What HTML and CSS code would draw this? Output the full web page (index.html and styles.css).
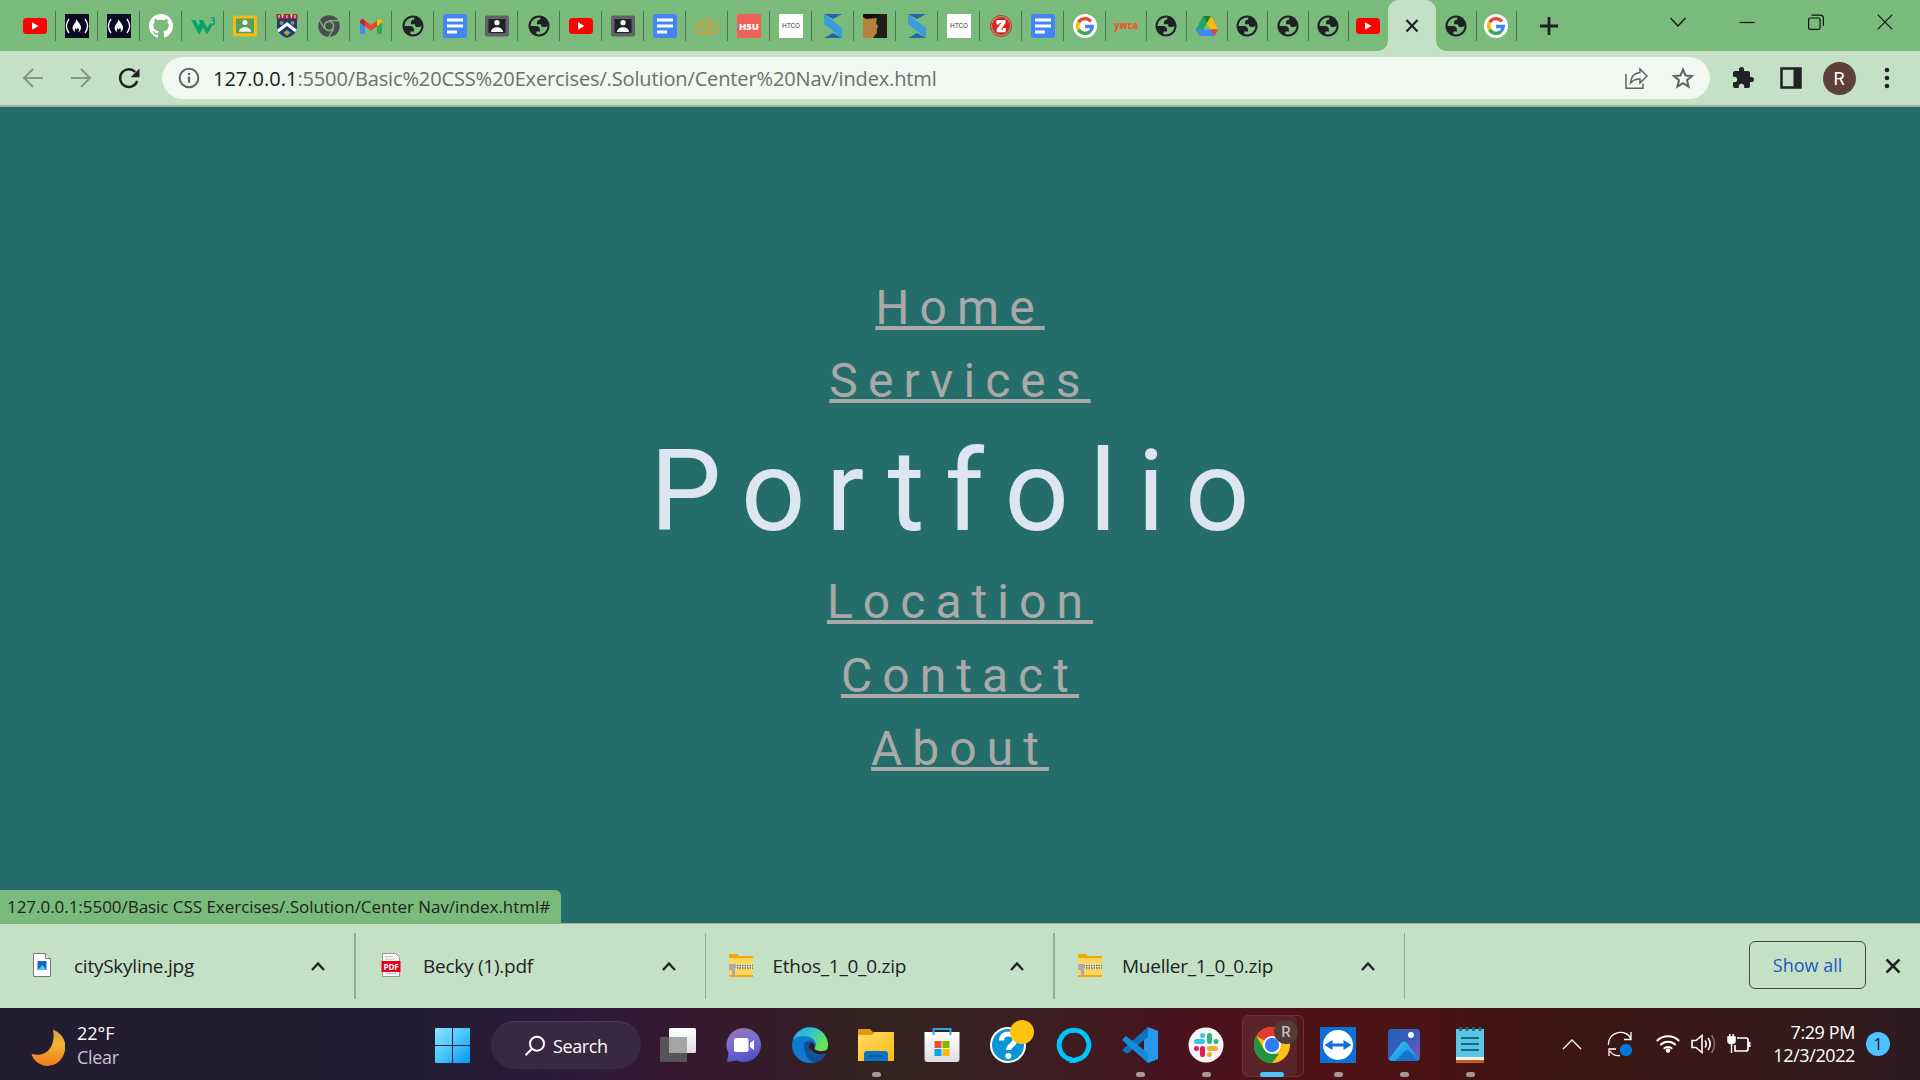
FILE: index.html
```html
<!DOCTYPE html>
<html lang="en">
<head>
<meta charset="utf-8">
<title>Center Nav</title>
<link rel="stylesheet" href="styles.css">
</head>
<body>
<svg class="defs" width="0" height="0" aria-hidden="true">
  <defs>
    <linearGradient id="g-win" x1="0" y1="0" x2="1" y2="1"><stop offset="0" stop-color="#8be3ff"/><stop offset=".5" stop-color="#45c8fb"/><stop offset="1" stop-color="#0594fb"/></linearGradient>
    <linearGradient id="g-moon" x1="0" y1="0" x2="0" y2="1"><stop offset="0" stop-color="#d99a52"/><stop offset=".4" stop-color="#f2b531"/><stop offset="1" stop-color="#ee7a1c"/></linearGradient>
    <linearGradient id="g-tv" x1="0" y1="0" x2="0" y2="1"><stop offset="0" stop-color="#fff"/><stop offset="1" stop-color="#dedede"/></linearGradient>
    <linearGradient id="g-chat" x1=".2" y1="0" x2=".5" y2="1"><stop offset="0" stop-color="#a06cab"/><stop offset=".4" stop-color="#7b73d3"/><stop offset="1" stop-color="#4f50c4"/></linearGradient>
    <linearGradient id="g-edge" x1="0" y1="0" x2="1" y2=".4"><stop offset="0" stop-color="#2fa9ec"/><stop offset=".5" stop-color="#2fc3cf"/><stop offset="1" stop-color="#6be255"/></linearGradient>
    <linearGradient id="g-fold" x1="0" y1="0" x2="1" y2="1"><stop offset="0" stop-color="#ffdc6b"/><stop offset="1" stop-color="#fcb80f"/></linearGradient>
    <linearGradient id="g-photo" x1="0" y1="0" x2="1" y2="1"><stop offset="0" stop-color="#1f63bd"/><stop offset=".5" stop-color="#3b5cbb"/><stop offset="1" stop-color="#8254b0"/></linearGradient>
    <linearGradient id="g-hill" x1="0" y1="0" x2="1" y2="1"><stop offset="0" stop-color="#35c7f5"/><stop offset="1" stop-color="#1484dd"/></linearGradient>
    <symbol id="youtube" viewBox="0 0 24 24"><rect y="4" width="24" height="16" rx="3.500" fill="#f00"/><path d="M9 8.300v7.400l6.500-3.700z" fill="#fff"/></symbol>
    <symbol id="fcc" viewBox="0 0 24 24"><path d="M0 0h24v24H0z" fill="#0a0a23"/><path d="M4 5Q-1.200 12 4 19M20 5Q25.200 12 20 19" fill="none" stroke="#fff" stroke-width="1.300"/><path d="M11.500 5c.8 3 4.500 5 4.500 8.800 0 2.200-1 3.700-2.800 4.400 1.400-2 .6-3.500-.4-4.700 0 1.200-.5 1.800-1.200 1.800-.8 0-1-.7-.8-1.600-1.500 1.800-1.400 3.200-.2 4.500-2-.7-3-2.200-3-4.200 0-3.300 3.700-5.200 3.900-9z" fill="#fff"/></symbol>
    <symbol id="github" viewBox="0 0 16 16"><path fill="#fff" d="M8 0C3.580 0 0 3.580 0 8c0 3.540 2.290 6.530 5.470 7.590.4.070.55-.17.55-.38 0-.19-.01-.82-.01-1.490-2.010.37-2.530-.49-2.690-.94-.09-.23-.48-.94-.82-1.130-.28-.15-.68-.52-.01-.53.63-.01 1.080.58 1.230.82.72 1.210 1.870.87 2.330.66.07-.52.28-.87.51-1.070-1.780-.2-3.640-.89-3.640-3.950 0-.87.31-1.590.82-2.150-.08-.2-.36-1.020.08-2.120 0 0 .67-.21 2.200.82.64-.18 1.320-.27 2-.27s1.360.09 2 .27c1.530-1.040 2.200-.82 2.200-.82.44 1.100.16 1.920.08 2.120.51.56.82 1.270.82 2.150 0 3.070-1.870 3.750-3.650 3.950.29.25.54.73.54 1.480 0 1.070-.01 1.930-.01 2.200 0 .21.15.46.55.38A8.010 8.010 0 0 0 16 8c0-4.420-3.580-8-8-8z"/></symbol>
    <symbol id="w3" viewBox="0 0 24 24"><path d="M0 6h4.500l3 6 1.500-3-1.300-3H12l4 8 3-4.500 2.500 2L16 20.500l-3.800-7L8 20.500z" fill="#05a36a"/><text x="19" y="10.500" font-family="Open Sans" font-size="10" font-weight="700" fill="#05a36a">3</text></symbol>
    <symbol id="classroom" viewBox="0 0 24 24"><rect y="1.500" width="24" height="21" rx="2" fill="#f5ba14"/><path d="M3 4.500h18v14.800H3z" fill="#57a05b"/><circle cx="12" cy="8.500" r="2.500" fill="#fff"/><path d="M6 17.800c0-6 12-6 12 0z" fill="#f1f5ee"/></symbol>
    <symbol id="classdark" viewBox="0 0 24 24"><rect y="1.500" width="24" height="21" rx="2" fill="#5f6368"/><path d="M3.500 5h17v14h-17z" fill="#202124"/><circle cx="12" cy="8.700" r="2.600" fill="#fff"/><path d="M6 18c0-6.500 12-6.500 12 0z" fill="#fff"/></symbol>
    <symbol id="shield" viewBox="0 0 24 24"><path d="M2 5h20v8c0 6-5 9-10 11C7 22 2 19 2 13z" fill="#173e78"/><path d="M1.500 0H6v1.500h3V0h6v1.500h3V0h4.500v5h-21z" fill="#aa2430"/><path d="M4 1v3M7.500 1v3M12 1v3M16.500 1v3M20 1v3" stroke="#e8d4d7" stroke-width="1.200"/><path d="M3 17l9-7 9 7" fill="none" stroke="#fff" stroke-width="3"/><circle cx="6.500" cy="9" r="2" fill="#9c8750"/><circle cx="17.500" cy="9" r="2" fill="#9c8750"/><path d="M8.500 18.500L12 16l3.500 2.500L12 22z" fill="#bd9a30"/></symbol>
    <symbol id="chromegray" viewBox="0 0 24 24"><circle cx="12" cy="12" r="10.800" fill="#4a4e52"/><path d="M12 6.700h10M7.400 14.700l-5-8.700M16.600 14.700l-5.200 8.800" stroke="#78b97a" stroke-width="1.300"/><circle cx="12" cy="12" r="4.600" fill="#4a4e52" stroke="#78b97a" stroke-width="1.700"/></symbol>
    <symbol id="gmail" viewBox="0 0 24 24"><path d="M1 6v12.500Q1 20 2.500 20H6V9.500z" fill="#4285f4"/><path d="M23 6v12.500q0 1.500-1.500 1.500H18V9.500z" fill="#34a853"/><path d="M18 12.300V6.500c2-2 5-1.700 5 1v1z" fill="#fbbc04"/><path d="M6 12.300V6.500C4 4.500 1 4.800 1 7.500v1z" fill="#c5221f"/><path d="M6 6.500l6 4.500 6-4.500v5.800l-6 4.500-6-4.500z" fill="#ea4335"/></symbol>
    <symbol id="globe" viewBox="0.600 0.600 22.800 22.800"><path fill="#202124" fill-rule="evenodd" d="M12 2C6.480 2 2 6.480 2 12s4.480 10 10 10 10-4.480 10-10S17.520 2 12 2zM4 12h4.400c3.407.022 4.922 1.730 4.543 5.127H9.488v2.470a8.004 8.004 0 0 0 10.498-8.083C19.327 12.504 18.332 13 17 13c-2.137 0-3.206-.916-3.206-2.750h-3.748c-.274-2.728.683-4.092 2.870-4.092 0-.975.327-1.597.811-1.970A8.004 8.004 0 0 0 4 12z"/></symbol>
    <symbol id="docs" viewBox="0 0 24 24"><rect width="24" height="24" rx="2.500" fill="#4285f4"/><path d="M4 6h16M4 12h16M4 18h10" stroke="#fff" stroke-width="2.800"/></symbol>
    <symbol id="cloud" viewBox="0 0 24 24"><path d="M6 19C-2 19-.500 10.500 5.500 11 6.500 4 15.500 4 17 10c7-.5 8.500 9 1 9z" fill="none" stroke="#e9942f" stroke-width="1.500"/><path d="M5 13l3-3v7M11 11h5v6h-5zM11 14h5" fill="none" stroke="#e9942f" stroke-width="1"/></symbol>
    <symbol id="h5u" viewBox="0 0 24 24"><path d="M0 0h24v24H0z" fill="#ee6158"/><text x="12" y="15.500" text-anchor="middle" textLength="20" font-family="Open Sans" font-size="9.500" font-weight="800" fill="#fff">H5U</text></symbol>
    <symbol id="htco" viewBox="0 0 24 24"><path d="M0 0h24v24H0z" fill="#fff"/><text x="12" y="14.200" text-anchor="middle" textLength="18" font-family="Inter" font-size="6.500" fill="#333">HTCO</text></symbol>
    <symbol id="ess" viewBox="0 0 24 24"><path d="M3 0h18l-9 5zM3 24l9-5 9 5z" fill="#1e66ae"/><path d="M3 0v10l18 14V14z" fill="#3b9cdd"/></symbol>
    <symbol id="face" viewBox="0 0 24 24"><path d="M0 0h24v24H0z" fill="#221d19"/><path d="M0 3l14 1-1 5 2 3-1 3v4l-2 2-2 3H0z" fill="#b5813f"/><path d="M0 0h16l-1 4L3 5 0 3z" fill="#160f0c"/></symbol>
    <symbol id="zed" viewBox="0 0 24 24"><circle cx="12" cy="12" r="10.500" fill="none" stroke="#e21e27" stroke-width="1"/><circle cx="12" cy="12" r="9" fill="#e21e27"/><path d="M7.500 6h9v3l-4.600 6.700h2V14h2.800v4.300h-9v-3L12.300 9h-2v1.500H7.500z" fill="#fff"/></symbol>
    <symbol id="google" viewBox="0 0 24 24"><circle cx="12" cy="12" r="12" fill="#fff"/><g fill="none" stroke-width="3.400"><path d="M17.900 7.500A7.400 7.400 0 0 0 5.600 8.300" stroke="#ea4335"/><path d="M5.600 8.300a7.400 7.400 0 0 0 0 7.400" stroke="#fbbc05"/><path d="M5.600 15.700a7.400 7.400 0 0 0 11.200 1.900" stroke="#34a853"/><path d="M16.800 17.600a7.400 7.400 0 0 0 2.500-5.100H12" stroke="#4285f4"/></g></symbol>
    <symbol id="ywca" viewBox="0 0 24 24"><text x="0" y="15" textLength="24" lengthAdjust="spacingAndGlyphs" font-family="Open Sans" font-size="10" font-weight="800" fill="#f2562c">ywca</text></symbol>
    <symbol id="drive" viewBox="0 0 24 24"><path d="M8 2h8l-4 7-7.500 13L1 15.500z" fill="#1ea362"/><path d="M8 2h8l7 13.500h-7.500z" fill="#fbbc04"/><path d="M8 2h8l-4 7z" fill="#188038"/><path d="M1 15.500h22L19.500 22h-15z" fill="#4285f4"/><path d="M15.500 15.500H23L19.500 22z" fill="#ea4335"/></symbol>
    <symbol id="zip" viewBox="0 0 24 24"><path d="M0 1h8l2 2h14v21H0z" fill="#f2a50c"/><path d="M0 5h24v17H0z" fill="#ffd65c"/><path d="M7 11h17v5H7z" fill="#f7eecb"/><path d="M8 12.500h16M8 15h16" stroke="#665b43" stroke-width="1.400" stroke-dasharray="1.500 1"/><path d="M0 11h6l2 2.500L6 16v7H3v-6H0z" fill="#aaa9ab"/></symbol>
    <symbol id="caret" viewBox="0 0 16 12"><path d="M2 10l6-6.500 6 6.500" fill="none" stroke="#202124" stroke-width="2.400"/></symbol>
  </defs>
</svg>

<header class="tabstrip">
  <div class="tab"><svg><use href="#youtube"/></svg></div>
  <div class="tab"><svg><use href="#fcc"/></svg></div>
  <div class="tab"><svg><use href="#fcc"/></svg></div>
  <div class="tab"><svg><use href="#github"/></svg></div>
  <div class="tab"><svg><use href="#w3"/></svg></div>
  <div class="tab"><svg><use href="#classroom"/></svg></div>
  <div class="tab"><svg><use href="#shield"/></svg></div>
  <div class="tab"><svg><use href="#chromegray"/></svg></div>
  <div class="tab"><svg><use href="#gmail"/></svg></div>
  <div class="tab"><svg><use href="#globe"/></svg></div>
  <div class="tab"><svg><use href="#docs"/></svg></div>
  <div class="tab"><svg><use href="#classdark"/></svg></div>
  <div class="tab"><svg><use href="#globe"/></svg></div>
  <div class="tab"><svg><use href="#youtube"/></svg></div>
  <div class="tab"><svg><use href="#classdark"/></svg></div>
  <div class="tab"><svg><use href="#docs"/></svg></div>
  <div class="tab"><svg><use href="#cloud"/></svg></div>
  <div class="tab"><svg><use href="#h5u"/></svg></div>
  <div class="tab"><svg><use href="#htco"/></svg></div>
  <div class="tab"><svg><use href="#ess"/></svg></div>
  <div class="tab"><svg><use href="#face"/></svg></div>
  <div class="tab"><svg><use href="#ess"/></svg></div>
  <div class="tab"><svg><use href="#htco"/></svg></div>
  <div class="tab"><svg><use href="#zed"/></svg></div>
  <div class="tab"><svg><use href="#docs"/></svg></div>
  <div class="tab"><svg><use href="#google"/></svg></div>
  <div class="tab slim"><svg><use href="#ywca"/></svg></div>
  <div class="tab slim"><svg><use href="#globe"/></svg></div>
  <div class="tab slim"><svg><use href="#drive"/></svg></div>
  <div class="tab slim"><svg><use href="#globe"/></svg></div>
  <div class="tab slim"><svg><use href="#globe"/></svg></div>
  <div class="tab slim"><svg><use href="#globe"/></svg></div>
  <div class="tab last"><svg><use href="#youtube"/></svg></div>
  <div class="tab-active"><svg viewBox="0 0 24 24"><path d="M6.500 6l11 11.500M17.500 6l-11 11.500" stroke="#202124" stroke-width="2.200"/></svg></div>
  <div class="tab slim"><svg><use href="#globe"/></svg></div>
  <div class="tab slim"><svg><use href="#google"/></svg></div>
  <svg class="newtab" viewBox="0 0 20 20"><path d="M10 1v18M1 10h18" stroke="#202124" stroke-width="2.800"/></svg>
  <div class="winbtns">
    <svg viewBox="0 0 16 16"><path d="M.5 4L8 12l7.500-8" fill="none" stroke="#111" stroke-width="1.200"/></svg>
    <svg viewBox="0 0 16 16"><path d="M.5 8.500h15" stroke="#111" stroke-width="1.200"/></svg>
    <svg viewBox="0 0 16 16"><rect x=".6" y="4" width="11.400" height="11.400" rx="1.500" fill="none" stroke="#111" stroke-width="1.200"/><path d="M3.500 1.200H12q3.400 0 3.400 3.400V12" fill="none" stroke="#111" stroke-width="1.200"/></svg>
    <svg viewBox="0 0 16 16"><path d="M.7.700l14.600 14.600M15.300.7L.7 15.300" stroke="#111" stroke-width="1.200"/></svg>
  </div>
</header>

<div class="toolbar">
  <svg class="tb dim" viewBox="0 0 24 24"><path d="M22 12H3.500M12 3l-9 9 9 9" /></svg>
  <svg class="tb dim" viewBox="0 0 24 24"><path d="M2 12h18.500M12 3l9 9-9 9"/></svg>
  <svg class="tb" viewBox="0 0 24 24"><path d="M20.200 15A8.800 8.800 0 1 1 18.200 6" fill="none" stroke="#202124" stroke-width="2.400"/><path d="M22.500 2.500v8.800h-8.800z" fill="#202124"/></svg>
  <div class="omnibox">
    <svg class="info" viewBox="0 0 24 24"><circle cx="12" cy="12" r="9.300" fill="none" stroke="#5f6368" stroke-width="2"/><path d="M12 10.500v6.300M12 7v2" stroke="#5f6368" stroke-width="2.300"/></svg>
    <span class="url"><b>127.0.0.1</b>:5500/Basic%20CSS%20Exercises/.Solution/Center%20Nav/index.html</span>
    <svg class="share" viewBox="0 0 26 24"><path d="M3 8v14.300h17v-4.500" fill="none" stroke="#5f6368" stroke-width="1.500"/><path d="M7.500 17C8 10.500 11.500 7 17 6.500V3l7 7-7 7v-4c-4.500 0-7 1-9.500 4z" fill="none" stroke="#5f6368" stroke-width="1.500"/></svg>
    <svg class="star" viewBox="0 0 24 24"><path d="M12 3.500l2.500 6 6.500.5-5 4.200 1.600 6.400L12 17.200l-5.600 3.400L8 14.200 3 10l6.500-.5z" fill="none" stroke="#5f6368" stroke-width="2"/></svg>
  </div>
  <svg class="puzzle" viewBox="0 0 24 24"><path fill="#202124" d="M20.500 11H19V7c0-1.100-.9-2-2-2h-4V3.500a2.500 2.500 0 0 0-5 0V5H4c-1.100 0-2 .9-2 2v3.800h1.500a2.700 2.700 0 0 1 0 5.400H2V20c0 1.100.9 2 2 2h3.800v-1.500a2.700 2.700 0 0 1 5.400 0V22H17c1.100 0 2-.9 2-2v-4h1.500a2.500 2.500 0 0 0 0-5z"/></svg>
  <svg class="side" viewBox="0 0 24 24"><path d="M2.500 2.500h19v19h-19z" fill="none" stroke="#202124" stroke-width="2.500"/><path d="M14.500 2h7v20h-7z" fill="#202124"/></svg>
  <div class="avatar">R</div>
  <svg class="dots" viewBox="0 0 24 24"><circle cx="12" cy="4" r="2.300"/><circle cx="12" cy="12" r="2.300"/><circle cx="12" cy="20" r="2.300"/></svg>
</div>

<main class="page">
  <nav class="menu">
    <a href="#">Home</a>
    <a href="#">Services</a>
    <a href="#" class="current">Portfolio</a>
    <a href="#">Location</a>
    <a href="#">Contact</a>
    <a href="#">About</a>
  </nav>
  <div class="status">127.0.0.1:5500/Basic CSS Exercises/.Solution/Center Nav/index.html#</div>
</main>

<section class="downloads">
  <div class="dl thick"><svg class="file" viewBox="0 0 24 24"><path d="M3.500.5h12l5 5v18h-17z" fill="#fff" stroke="#777"/><path d="M15.500.5v5h5" fill="#eee" stroke="#777"/><rect x="7.500" y="8" width="9" height="9" fill="#1765c0"/><path d="M7.500 17l5-5 4 5z" fill="#47c4f4"/></svg><span>citySkyline.jpg</span><svg class="caret"><use href="#caret"/></svg></div>
  <div class="dl"><svg class="file" viewBox="0 0 24 24"><path d="M3.500.5h13l4 4v19h-17z" fill="#fff" stroke="#999"/><path d="M6 3.500h8M6 6h10M6 20.500h12" stroke="#bbb"/><rect x="2.500" y="8" width="19" height="11" fill="#e2001a"/><text x="12" y="16.500" text-anchor="middle" textLength="15" font-family="Open Sans" font-size="8" font-weight="700" fill="#fff">PDF</text></svg><span>Becky (1).pdf</span><svg class="caret"><use href="#caret"/></svg></div>
  <div class="dl thick"><svg class="file"><use href="#zip"/></svg><span>Ethos_1_0_0.zip</span><svg class="caret"><use href="#caret"/></svg></div>
  <div class="dl"><svg class="file"><use href="#zip"/></svg><span>Mueller_1_0_0.zip</span><svg class="caret"><use href="#caret"/></svg></div>
  <button class="showall">Show all</button>
  <svg class="dismiss" viewBox="0 0 16 16"><path d="M1.500 1.500l13 13M14.500 1.500l-13 13" stroke="#202124" stroke-width="2.500"/></svg>
</section>

<footer class="taskbar">
  <div class="weather">
    <svg viewBox="0 0 34 38"><path d="M22 .5C36 6 38 22 28.500 32 19 41 4 37 .5 25 16 29 25 17 22 .5z" fill="url(#g-moon)"/></svg>
    <div><div>22°F</div><div class="cond">Clear</div></div>
  </div>
  <div class="apps">
    <svg class="start" viewBox="0 0 35 35"><g fill="url(#g-win)"><path d="M0 1q0-1 1-1h16v17H0zM18 0h16q1 0 1 1v16H18zM0 18h17v17H1q-1 0-1-1zM18 18h17v16q0 1-1 1H18z"/></g></svg>
    <div class="search"><svg viewBox="0 0 22 22"><circle cx="13" cy="8.700" r="7" fill="none" stroke="#fff" stroke-width="2"/><path d="M8 13.800L1.500 20.300" stroke="#fff" stroke-width="2.200"/></svg><span>Search</span></div>
    <div class="app"><svg viewBox="0 0 36 36"><rect x="9" y="1" width="27" height="25" rx="1.500" fill="url(#g-tv)"/><rect y="10" width="27" height="25" rx="1.500" fill="#5c5c5c" fill-opacity=".88"/><path d="M9 10h18v16H9z" fill="#a5a5a5"/></svg></div>
    <div class="app"><svg viewBox="0 0 36 36"><path d="M18 1a17 17 0 1 1-7 32.500L1 35l1.500-9A17 17 0 0 1 18 1z" fill="url(#g-chat)"/><rect x="8" y="11" width="14.500" height="14" rx="2" fill="#fff"/><path d="M24 16l4-3v10l-4-3z" fill="#fff"/></svg></div>
    <div class="app"><svg viewBox="0 0 36 36"><circle cx="18" cy="18" r="18" fill="#0f7ad0"/><path d="M1 13C5 0 22-4 31 6c6 7 6 14 3 17-3 2.500-9 1.500-11-.5-1.500-1.500 1-2.500 1-5 0-8-16-12-23-4.500z" fill="url(#g-edge)"/><path d="M12 18c0-5 9-6 10-1-4-2-6 2-4 6 3 6 10 6 16 4-4 7-9 9-13 8-6-2-9-10-9-17z" fill="#104f9c"/><path d="M22 16.500c-3-2-6 .5-5 4.500 3 5 9 8 16 6 3-1 3.500-3 3-4.500-4 2.500-10 2-13 0-1.500-1.500 1-2.500-1-6z" fill="#321c22"/></svg></div>
    <div class="app run"><svg viewBox="0 0 36 36"><path d="M0 3q0-1 1-1h11l3 3h20q1 0 1 1v8H0z" fill="#e09b10"/><path d="M0 8h14l3-3h19v29H0z" fill="url(#g-fold)"/><path d="M6 34v-7q0-3 3-3h18q3 0 3 3v7z" fill="#0b73c8"/><path d="M11 29h14" stroke="#064a8a" stroke-width="1.500"/></svg></div>
    <div class="app"><svg viewBox="0 0 36 36"><path d="M9.500 8V2h17v6" fill="none" stroke="#29a8e8" stroke-width="2"/><path d="M.5 5h35v27q0 3-3 3h-29q-3 0-3-3z" fill="url(#g-tv)"/><path d="M9.500 5v3M26.500 5v3" stroke="#29a8e8" stroke-width="2"/><path d="M10.500 14h7v7h-7z" fill="#f25022"/><path d="M18.500 14h7v7h-7z" fill="#7fba00"/><path d="M10.500 22h7v7h-7z" fill="#00a4ef"/><path d="M18.500 22h7v7h-7z" fill="#ffb900"/></svg></div>
    <div class="app"><svg viewBox="0 0 36 36"><circle cx="18" cy="18" r="17" fill="#0a96d6" stroke="#fff" stroke-width="2"/><path d="M11.500 13.500c0-9 13.500-8.500 13.500-.5 0 5-6.500 5-6.500 10" fill="none" stroke="#fff" stroke-width="5"/><circle cx="18.300" cy="29" r="3" fill="#fff"/></svg><i class="badge yellow"></i></div>
    <div class="app"><svg viewBox="0 0 36 36"><path d="M15 32.500A14.800 14.800 0 1 1 21 32.500c-2.500.5-4 1-5 3.500 0-2 0-2.500-1-3.500z" fill="none" stroke="#00c3fb" stroke-width="5"/></svg></div>
    <div class="app run"><svg viewBox="0 0 36 36"><path d="M26 0l10 4v28l-10 4-4-4V4z" fill="#2899ea"/><path d="M26 0v10L5 27l-5-4z" fill="#0d73bd"/><path d="M0 13l4-4 22 17v10z" fill="#138bd8"/></svg></div>
    <div class="app run"><svg viewBox="0 0 36 36"><circle cx="18" cy="18" r="17.500" fill="#f7f5f7"/><g stroke-width="5" stroke-linecap="round"><path d="M14.500 8.500v0M8.500 14.500h6" stroke="#36c5f0"/><path d="M21.500 8.500v6M28 14.500v0" stroke="#2eb67d"/><path d="M21.500 21.500h6M21.500 27.500v0" stroke="#ecb22e"/><path d="M14.500 21.500v6M8.500 21.500v0" stroke="#e01e5a"/></g></svg></div>
    <div class="app run focus"><svg viewBox="0 0 36 36"><circle cx="18" cy="18" r="18" fill="#fbc116"/><path d="M18 18L2.400 9A18 18 0 0 1 33.600 9H18z" fill="#e33b2e"/><path d="M2.400 9l7.800 13.500L18 27l-2 9A18 18 0 0 1 2.400 9z" fill="#229342"/><path d="M10 22.500L18 27h7l-7 9a18 18 0 0 1-3-.3z" fill="#229342"/><circle cx="18" cy="18" r="9" fill="#fff"/><circle cx="18" cy="18" r="7.200" fill="#2d7df0"/></svg><i class="badge brown">R</i></div>
    <div class="app run"><svg viewBox="0 0 36 36"><path d="M0 0h36v36H0z" fill="#0b70d8"/><circle cx="18" cy="18" r="15" fill="#fff"/><path d="M4.500 18l8-5v3.500h11V13l8 5-8 5v-3.500h-11V23z" fill="#0b70d8"/></svg></div>
    <div class="app run"><svg viewBox="0 0 36 36"><rect x="2" y="2" width="32" height="32" rx="4" fill="url(#g-photo)"/><path d="M3 32l12-16q3-3 6 0l12 16q-1 2-3 2H6q-2 0-3-2z" fill="url(#g-hill)"/><path d="M9 34l10-10q2-1.500 4 0l9 9q-1 1-2 1z" fill="#1673d0"/><circle cx="25" cy="8" r="3" fill="#fff"/></svg></div>
    <div class="app run"><svg viewBox="0 0 36 36"><path d="M4 2h28v30H4z" fill="#5cc6e4"/><path d="M4 30h28v3H4z" fill="#f3f3f3"/><path d="M4 33h28v3H4z" fill="#c25e10"/><path d="M9 11h18M9 17h18M9 23h18" stroke="#146a86" stroke-width="2"/><path d="M8.500 0v4M15 0v4M21.500 0v4M28 0v4" stroke="#146a86" stroke-width="2.500"/></svg></div>
  </div>
  <div class="tray">
    <svg class="t1" viewBox="0 0 20 12"><path d="M1 11l9-9 9 9" fill="none" stroke="#fff" stroke-width="1.400"/></svg>
    <svg class="t2" viewBox="0 0 26 26"><path d="M1.500 14C.5 0 20-3 24 8M24 1v7.500h-7M2 25v-7h7M3 20c2 3.500 6 5 10 4.500" fill="none" stroke="#fff" stroke-width="1.300"/><circle cx="19" cy="19" r="6.200" fill="#0078d4"/></svg>
    <svg class="t3" viewBox="0 0 24 20"><g fill="none" stroke="#fff" stroke-width="2"><path d="M.8 7a15.800 15.800 0 0 1 22.400 0M4.300 11a11 11 0 0 1 15.400 0M7.800 14.700a6 6 0 0 1 8.400 0"/></g><circle cx="12" cy="16.500" r="2.200" fill="#fff"/></svg>
    <svg class="t4" viewBox="0 0 26 20"><path d="M1 6.500h4L11 1.500v17L5 13.500H1z" fill="none" stroke="#fff" stroke-width="1.600"/><path d="M14 6.500q2.500 3.500 0 7M17 4q4.500 6 0 12" fill="none" stroke="#fff" stroke-width="1.600"/><path d="M20.500 1q6 9 0 18" fill="none" stroke="#fff" stroke-opacity=".35" stroke-width="1.600"/></svg>
    <svg class="t5" viewBox="0 0 25 20"><path d="M1 3h7v4q0 2.500-3.500 2.500T1 7zM2.800 0v3M6.200 0v3M4.500 9v10" fill="#fff" stroke="#fff" stroke-width="1.500"/><path d="M10 4h9q2 0 2 2v9q0 2-2 2H8v-6" fill="none" stroke="#fff" stroke-width="1.700"/><path d="M21 8h2.500v5H21z" fill="#fff"/></svg>
    <div class="clock"><div>7:29 PM</div><div>12/3/2022</div></div>
    <div class="count">1</div>
  </div>
</footer>
</body>
</html>
```
FILE: styles.css
```css
* { box-sizing: border-box; }

body {
  margin: 0;
  width: 1920px;
  height: 1080px;
  overflow: hidden;
  display: flex;
  flex-direction: column;
  font-family: "Open Sans", sans-serif;
  color: #202124;
}

.defs { position: absolute; }
svg { display: block; flex: none; }

/* tab strip */
.tabstrip {
  height: 51px;
  flex: none;
  display: flex;
  padding-left: 14px;
  background: #7abb7c;
}
.tab {
  flex: none;
  width: 42px;
  height: 30px;
  margin-top: 11px;
  padding: 3px 0 0 9px;
  border-right: 1px solid #4c7850;
}
.tab svg { width: 24px; height: 24px; }
.tab.slim { width: 40.5px; padding-left: 7.500px; }
.tab.last { width: 39px; padding-left: 7px; border-right: 0; }
.tab-active {
  position: relative;
  flex: none;
  width: 48px;
  display: grid;
  place-items: center;
  background: #c5e1c5;
  border-radius: 11px 11px 0 0;
}
.tab-active::before,
.tab-active::after {
  content: "";
  position: absolute;
  bottom: 0;
  width: 10px;
  height: 10px;
}
.tab-active::before { left: -10px; background: radial-gradient(circle at 0 0, transparent 9.500px, #c5e1c5 10px); }
.tab-active::after { right: -10px; background: radial-gradient(circle at 100% 0, transparent 9.500px, #c5e1c5 10px); }
.tab-active svg { width: 24px; height: 24px; }
.newtab { width: 20px; height: 20px; margin: 15.500px 0 0 22px; }
.winbtns {
  display: flex;
  gap: 53px;
  margin: 13.500px 27px 0 auto;
}
.winbtns svg { width: 16px; height: 16px; }

/* toolbar */
.toolbar {
  height: 56px;
  flex: none;
  display: flex;
  align-items: center;
  padding: 0 21px;
  background: #c5e1c5;
  border-bottom: 2px solid #a0b5a0;
}
.tb { width: 24px; height: 24px; margin-right: 24px; }
.dim { fill: none; stroke: #849885; stroke-width: 2; }
.omnibox {
  width: 1548px;
  height: 42px;
  margin-left: -3px;
  padding: 0 15px;
  display: flex;
  align-items: center;
  border-radius: 21px;
  background: #f1f7f1;
}
.info { width: 24px; height: 24px; }
.url {
  margin: 0 auto 0 12px;
  font-size: 20px;
  letter-spacing: -.13px;
  color: #6c716e;
  white-space: nowrap;
}
.url b { font-weight: 400; letter-spacing: 0; color: #202124; }
.share { width: 26px; height: 24px; }
.star { width: 24px; height: 24px; margin-left: 22px; }
.puzzle { width: 24px; height: 24px; margin-left: 21px; }
.side { width: 24px; height: 24px; margin-left: 24px; }
.avatar {
  width: 33px;
  height: 33px;
  margin: 0 19.500px;
  border-radius: 50%;
  background: #5d4037;
  color: #fff;
  font: 18px/34px Roboto, sans-serif;
  text-align: center;
}
.dots { width: 24px; height: 24px; fill: #202124; }

/* page */
.page {
  position: relative;
  flex: 1;
  display: flex;
  justify-content: center;
  align-items: center;
  padding-top: 26px;
  background: #256d6b;
  border-bottom: 1px solid #9fb5a4;
  font-family: Roboto, sans-serif;
}
.menu {
  display: flex;
  flex-direction: column;
  align-items: center;
  gap: 16.600px;
}
.menu a {
  font-size: 48px;
  line-height: 57px;
  letter-spacing: 10.050px;
  color: #a9a9a9;
  text-decoration: underline 4px;
  text-underline-offset: 2px;
  text-decoration-skip-ink: none;
}
.menu .current {
  font-size: 113px;
  line-height: 131px;
  letter-spacing: 20.400px;
  color: #dde5f1;
  text-decoration: none;
}
.status {
  position: absolute;
  left: 0;
  bottom: -1px;
  width: 561px;
  height: 34px;
  padding-left: 7px;
  border-radius: 0 6px 0 0;
  background: #7abb7c;
  color: #202124;
  font: 17px/33px "Open Sans", sans-serif;
  letter-spacing: -.04px;
  white-space: nowrap;
}

/* downloads */
.downloads {
  height: 84px;
  flex: none;
  display: flex;
  align-items: center;
  background: #c5e1c5;
  font-size: 19px;
  letter-spacing: -.25px;
}
.dl {
  width: 349.500px;
  height: 66px;
  display: flex;
  align-items: center;
  padding: 0 28px 0 23px;
  border-right: 1px solid #94ab95;
}
.dl:first-child { width: 356px; padding-left: 30px; }
.dl.thick { border-right-width: 2px; }
.file { width: 24px; height: 24px; margin: -3px 20px 0 0; }
.caret { width: 16px; height: 12px; margin-left: auto; }
.showall {
  width: 117px;
  height: 48px;
  margin: -2px 0 0 auto;
  padding: 0;
  border: 1px solid #3c4a40;
  border-radius: 6px;
  background: none;
  color: #1b57c2;
  font: 500 18px "Open Sans", sans-serif;
}
.dismiss { width: 16px; height: 16px; margin: 0 19px 0 19px; }

/* taskbar */
.taskbar {
  height: 72px;
  flex: none;
  display: flex;
  color: #fff;
  font-size: 18px;
  background: linear-gradient(90deg, #231d31 0, #231d33 430px, #2e193b 560px, #36182f 700px, #351d28 790px, #33231f 870px, #3a2024 1010px, #48131f 1180px, #4e1216 1300px, #4b1313 1400px, #3e1612 1560px, #371917 1720px, #301b20 1880px, #2a1a20 1920px);
}
.weather {
  width: 435px;
  padding: 13px 0 0 31px;
  display: flex;
  gap: 12px;
  line-height: 24px;
}
.weather svg { width: 34px; height: 38px; margin-top: 8px; }
.cond { color: #c6c4cb; letter-spacing: -.3px; }
.apps { display: flex; align-items: flex-start; }
.start { width: 35px; height: 35px; margin: 20px 21px 0 0; }
.search {
  width: 150px;
  height: 48px;
  margin: 13px 4px 0 0;
  padding-left: 33px;
  display: flex;
  align-items: center;
  gap: 7px;
  border-radius: 24px;
  border-top: 1px solid #4a3a55;
  background: #3a2843;
  letter-spacing: -.4px;
}
.search svg { width: 22px; height: 22px; }
.app {
  position: relative;
  width: 66px;
  height: 60px;
  padding: 12px 15px 0;
  margin-top: 7px;
}
.app svg { width: 36px; height: 36px; position: relative; }
.app.run::after {
  content: "";
  position: absolute;
  left: 28.500px;
  bottom: -2px;
  width: 9px;
  height: 5px;
  border-radius: 3px;
  background: #a69799;
}
.app.focus::before {
  content: "";
  position: absolute;
  left: 3px;
  top: 0;
  width: 60px;
  height: 60px;
  border: 1px solid #6b3339;
  border-radius: 6px;
  background: #5a2529;
  box-shadow: inset -6px 0 0 #52191d;
}
.app.focus::after { left: 21px; width: 24px; background: #4cc2ff; }
.badge {
  position: absolute;
  left: 35px;
  top: 5px;
  width: 24px;
  height: 24px;
  border-radius: 50%;
}
.yellow { background: #ffc20e; }
.brown { background: #523c35; color: #c9bfbb; font: 500 15px/24px Roboto, sans-serif; text-align: center; }

.tray {
  flex: 1;
  display: flex;
  align-items: center;
}
.t1 { width: 20px; height: 12px; margin-left: 59px; }
.t2 { width: 26px; height: 26px; margin-left: 25px; }
.t3 { width: 24px; height: 20px; margin-left: 23px; }
.t4 { width: 26px; height: 20px; margin-left: 11px; }
.t5 { width: 25px; height: 20px; margin-left: 10px; }
.clock {
  margin-left: auto;
  line-height: 23px;
  letter-spacing: -.4px;
  text-align: right;
}
.count {
  width: 24px;
  height: 24px;
  margin: 0 30px 0 11px;
  border-radius: 50%;
  background: #4cc2ff;
  color: #111;
  font-size: 16px;
  line-height: 24px;
  text-align: center;
}
```
